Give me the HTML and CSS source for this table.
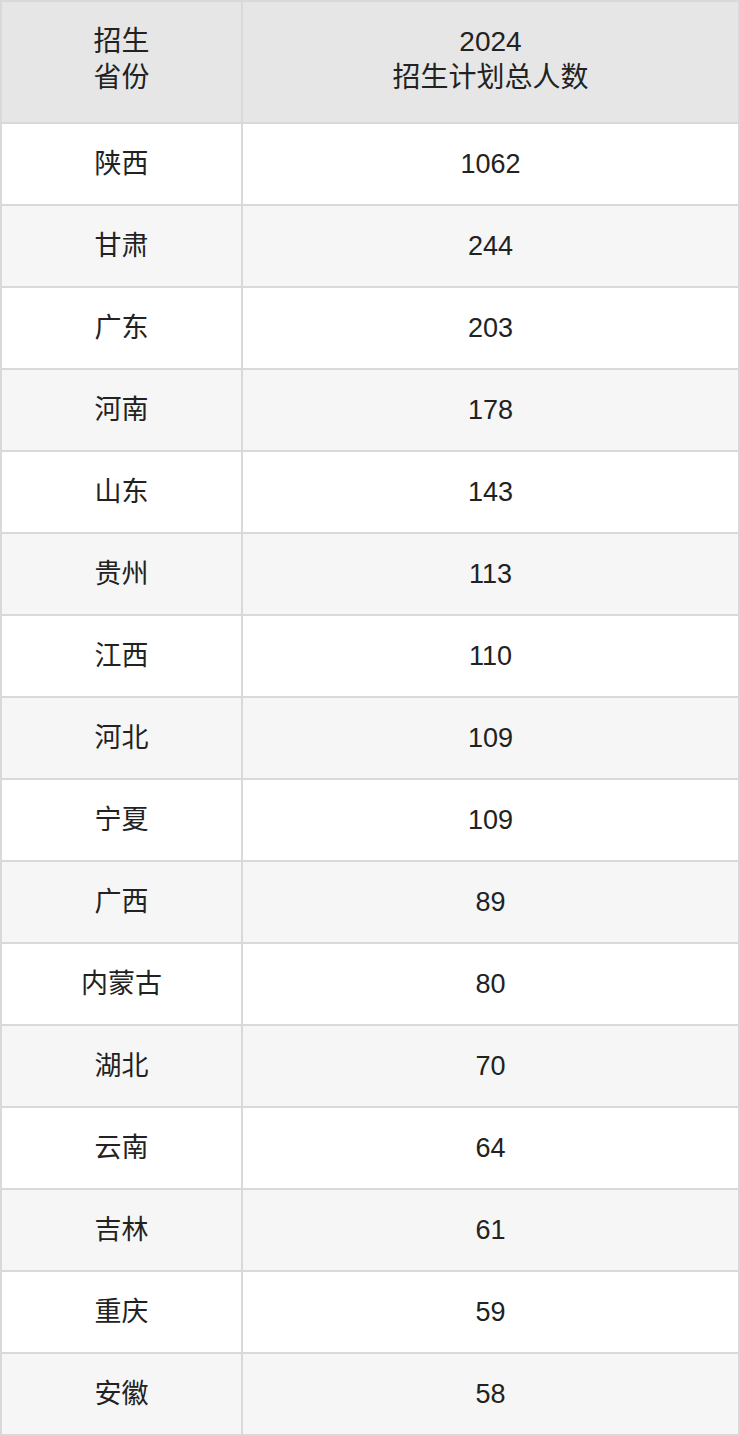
FILE: index.html
```html
<!DOCTYPE html>
<html lang="zh">
<head>
<meta charset="utf-8">
<link rel="stylesheet" href="styles.css">
</head>
<body>
<table class="plan">
  <colgroup><col class="c-prov"><col class="c-num"></colgroup>
  <thead>
    <tr><th>招生<br>省份</th><th>2024<br>招生计划总人数</th></tr>
  </thead>
  <tbody>
    <tr><td>陕西</td><td>1062</td></tr>
    <tr><td>甘肃</td><td>244</td></tr>
    <tr><td>广东</td><td>203</td></tr>
    <tr><td>河南</td><td>178</td></tr>
    <tr><td>山东</td><td>143</td></tr>
    <tr><td>贵州</td><td>113</td></tr>
    <tr><td>江西</td><td>110</td></tr>
    <tr><td>河北</td><td>109</td></tr>
    <tr><td>宁夏</td><td>109</td></tr>
    <tr><td>广西</td><td>89</td></tr>
    <tr><td>内蒙古</td><td>80</td></tr>
    <tr><td>湖北</td><td>70</td></tr>
    <tr><td>云南</td><td>64</td></tr>
    <tr><td>吉林</td><td>61</td></tr>
    <tr><td>重庆</td><td>59</td></tr>
    <tr><td>安徽</td><td>58</td></tr>
  </tbody>
</table>
</body>
</html>
```
FILE: styles.css
```css
html, body {
  margin: 0;
  padding: 0;
  background: #ffffff;
}
.plan {
  width: 740px;
  border-collapse: collapse;
  table-layout: fixed;
  font-family: "Liberation Sans", "Noto Sans CJK SC", sans-serif;
  font-size: 27px;
  line-height: 36px;
  color: #222222;
}
.c-prov { width: 241px; }
.plan th, .plan td {
  border: 2px solid #d9d9d9;
  text-align: center;
  vertical-align: middle;
  padding: 0;
  font-weight: normal;
}
.plan th {
  background: #e6e6e6;
  height: 116px;
  font-size: 28px;
  padding-bottom: 4px;
}
.plan td {
  height: 80px;
}
.plan tbody tr:nth-child(even) td {
  background: #f6f6f6;
}
```
